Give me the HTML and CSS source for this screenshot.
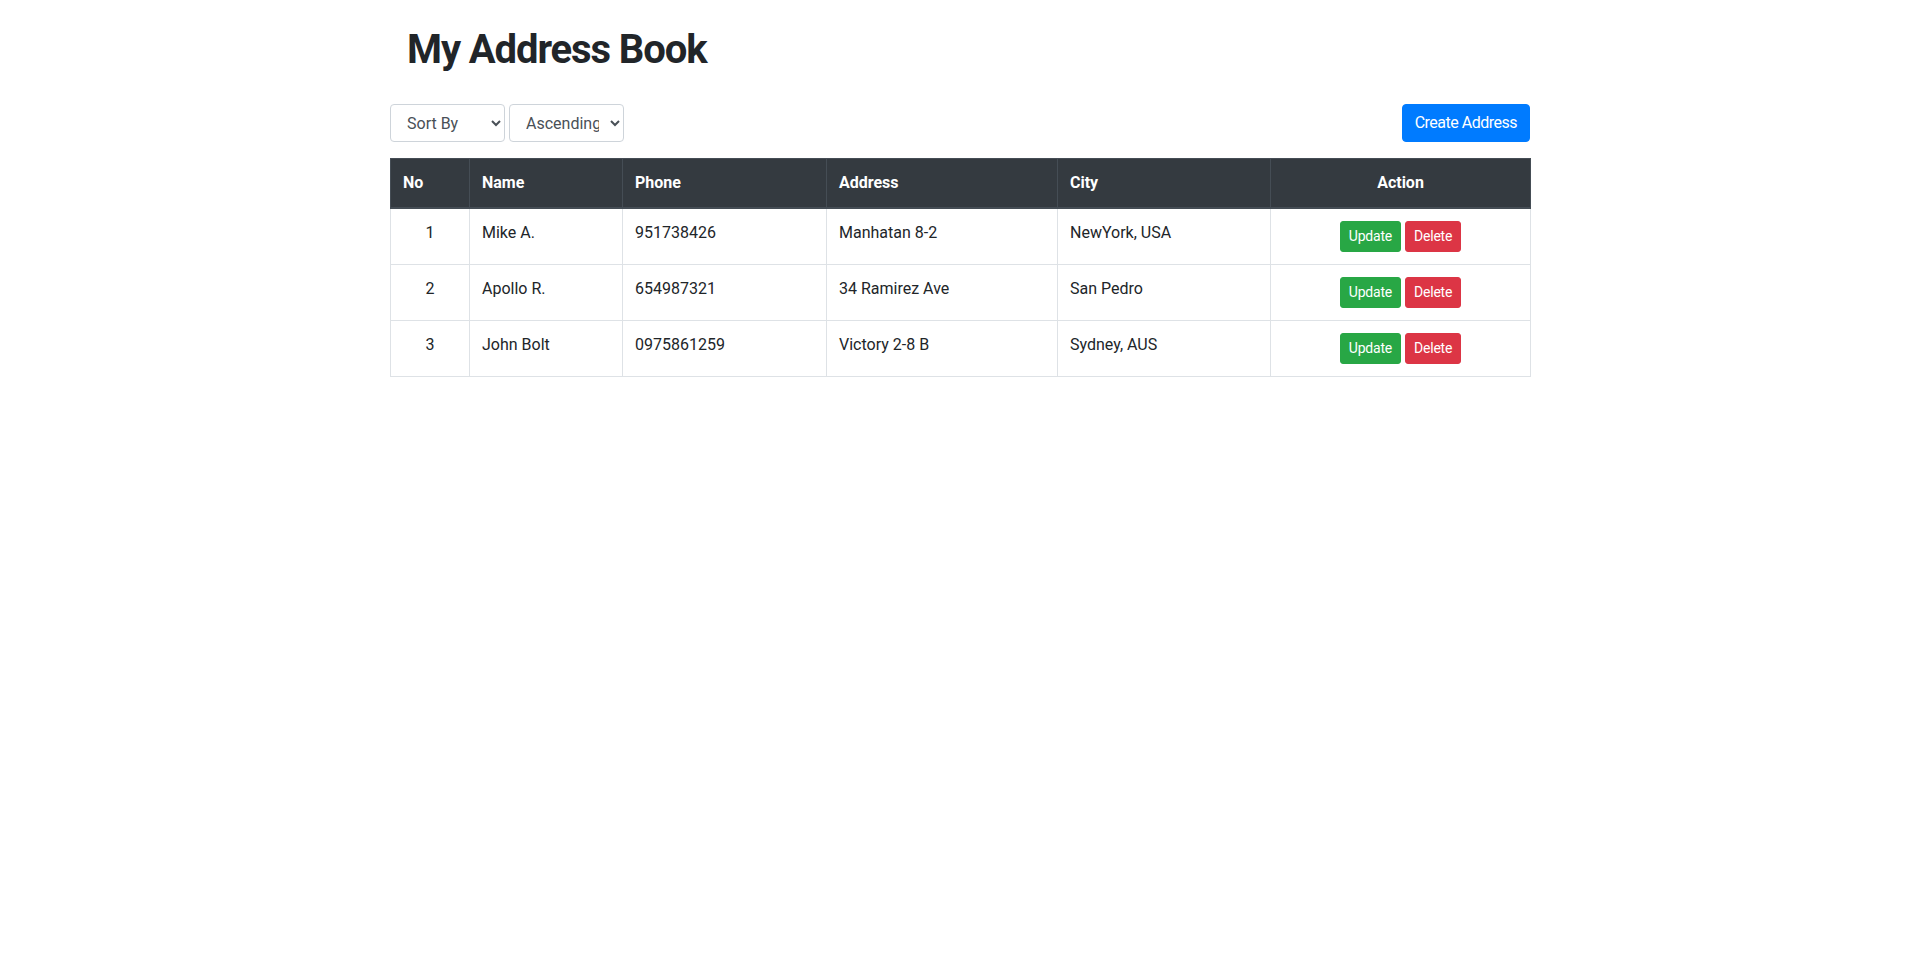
FILE: index.html
```html
<!DOCTYPE html>
<html lang="en">
<head>
<meta charset="utf-8">
<title>My Address Book</title>
<link rel="stylesheet" href="styles.css">
</head>
<body>
<div class="container">
  <header class="page-head">
    <h1 class="title">My Address Book</h1>
  </header>
  <div class="toolbar">
    <div class="sorters">
      <select class="select">
        <option>Sort By</option>
        <option>Name</option>
        <option>City</option>
      </select>
      <select class="select">
        <option>Ascending</option>
        <option>Descending</option>
      </select>
    </div>
    <button class="btn btn-primary">Create Address</button>
  </div>
  <table class="table">
    <colgroup>
      <col class="c-no"><col class="c-name"><col class="c-phone"><col class="c-addr"><col class="c-city"><col class="c-act">
    </colgroup>
    <thead>
      <tr>
        <th>No</th><th>Name</th><th>Phone</th><th>Address</th><th>City</th><th class="center">Action</th>
      </tr>
    </thead>
    <tbody>
      <tr>
        <td class="center">1</td><td>Mike A.</td><td>951738426</td><td>Manhatan 8-2</td><td>NewYork, USA</td>
        <td class="center"><button class="btn-sm btn-success">Update</button> <button class="btn-sm btn-danger">Delete</button></td>
      </tr>
      <tr>
        <td class="center">2</td><td>Apollo R.</td><td>654987321</td><td>34 Ramirez Ave</td><td>San Pedro</td>
        <td class="center"><button class="btn-sm btn-success">Update</button> <button class="btn-sm btn-danger">Delete</button></td>
      </tr>
      <tr>
        <td class="center">3</td><td>John Bolt</td><td>0975861259</td><td>Victory 2-8 B</td><td>Sydney, AUS</td>
        <td class="center"><button class="btn-sm btn-success">Update</button> <button class="btn-sm btn-danger">Delete</button></td>
      </tr>
    </tbody>
  </table>
</div>
</body>
</html>
```

FILE: styles.css
```css
* { box-sizing: border-box; }
html, body { margin: 0; padding: 0; background: #fff; }
body {
  font-family: Roboto, "Liberation Sans", sans-serif;
  font-size: 16px;
  line-height: 1.5;
  color: #212529;
}
.container {
  width: 1140px;
  margin: 0 auto;
}
.page-head {
  padding: 26px 0 0 17px;
}
.title {
  margin: 0 0 30px;
  font-size: 40px;
  line-height: 1.2;
  font-weight: 700;
  letter-spacing: -1.1px;
  color: #212529;
}
.toolbar {
  display: flex;
  justify-content: space-between;
  align-items: center;
  margin-bottom: 16px;
}
.sorters { display: flex; gap: 4px; }
.select {
  width: 115px;
  height: 38px;
  padding: 6px 8px 6px 12px;
  font-family: inherit;
  font-size: 16px;
  color: #495057;
  background: #fff;
  border: 1px solid #ced4da;
  border-radius: 4px;
}
.btn {
  font-family: inherit;
  font-size: 16px;
  line-height: 1.5;
  padding: 6px 12px;
  letter-spacing: -0.5px;
  border: 1px solid transparent;
  border-radius: 4px;
  cursor: pointer;
}
.btn-primary { background: #007bff; border-color: #007bff; color: #fff; }
.btn-sm {
  font-family: inherit;
  font-size: 14px;
  line-height: 1.5;
  padding: 4px 8px;
  letter-spacing: -0.2px;
  border: 1px solid transparent;
  border-radius: 3px;
  color: #fff;
  cursor: pointer;
}
.btn-success { background: #28a745; border-color: #28a745; }
.btn-danger { background: #dc3545; border-color: #dc3545; }
.table {
  width: 1140px;
  table-layout: fixed;
  border-collapse: collapse;
  border: 1px solid #dee2e6;
}
.c-no { width: 79px; }
.c-name { width: 153px; }
.c-phone { width: 204px; }
.c-addr { width: 231px; }
.c-city { width: 213px; }
.c-act { width: 260px; }
.table th, .table td {
  padding: 12px;
  text-align: left;
  vertical-align: top;
  border: 1px solid #dee2e6;
}
.table thead th {
  background: #343a40;
  color: #fff;
  font-weight: 700;
  border-color: #454d55;
  border-bottom: 2px solid #454d55;
  vertical-align: bottom;
}
.table .center { text-align: center; }
```
